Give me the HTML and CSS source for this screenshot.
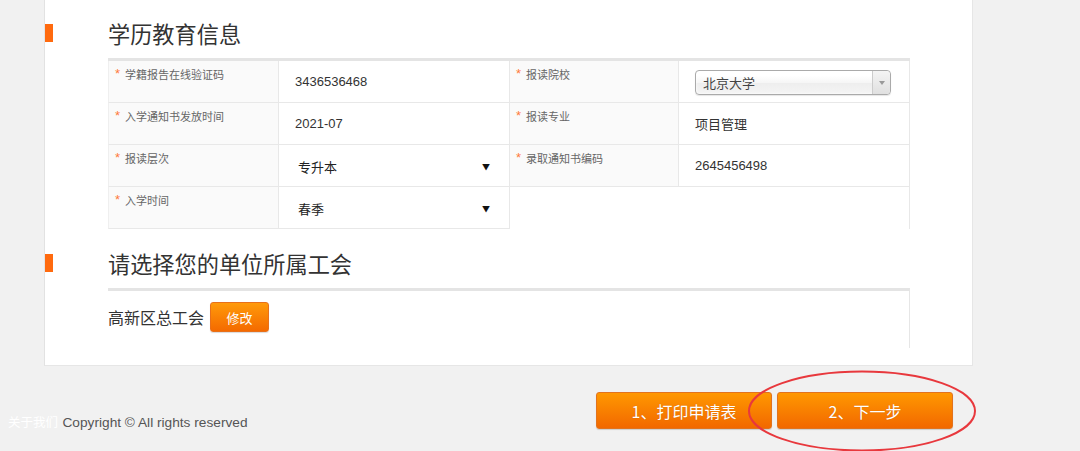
FILE: index.html
```html
<!DOCTYPE html>
<html lang="zh-CN">
<head>
<meta charset="utf-8">
<title>学历教育信息</title>
<link rel="stylesheet" href="styles.css">
</head>
<body>
<div class="panel">
  <div class="sec-head">
    <span class="marker"></span>
    <h2 class="sec-title">学历教育信息</h2>
  </div>
  <div class="info-grid">
    <div class="lbl"><span class="star">*</span>学籍报告在线验证码</div>
    <div class="val bdr">3436536468</div>
    <div class="lbl"><span class="star">*</span>报读院校</div>
    <div class="val bdr">
      <div class="chosen"><span class="chosen-text">北京大学</span><span class="chosen-arrow"><i></i></span></div>
    </div>

    <div class="lbl"><span class="star">*</span>入学通知书发放时间</div>
    <div class="val bdr">2021-07</div>
    <div class="lbl"><span class="star">*</span>报读专业</div>
    <div class="val bdr">项目管理</div>

    <div class="lbl"><span class="star">*</span>报读层次</div>
    <div class="val bdr"><div class="plain-select"><span>专升本</span><span class="tri">▼</span></div></div>
    <div class="lbl"><span class="star">*</span>录取通知书编码</div>
    <div class="val bdr">2645456498</div>

    <div class="lbl"><span class="star">*</span>入学时间</div>
    <div class="val bdr"><div class="plain-select"><span>春季</span><span class="tri">▼</span></div></div>
    <div class="empty"></div>
    <div class="empty bdr"></div>
  </div>

  <div class="sec-head second">
    <span class="marker"></span>
    <h2 class="sec-title">请选择您的单位所属工会</h2>
  </div>
  <div class="union-box">
    <span class="union-name">高新区总工会</span>
    <button class="btn-small">修改</button>
  </div>
</div>

<div class="footer">
  <div class="copy"><span class="about">关于我们</span> <span class="rights">Copyright © All rights reserved</span></div>
  <div class="actions">
    <button class="btn-big">1、打印申请表</button>
    <button class="btn-big">2、下一步</button>
  </div>
</div>

<svg class="circle-mark" width="236" height="86" viewBox="0 0 236 86">
  <ellipse cx="116" cy="42" rx="113" ry="39.5" fill="none" stroke="#e8383d" stroke-width="2"/>
</svg>
</body>
</html>
```
FILE: styles.css
```css
html, body {
  margin: 0;
  padding: 0;
}
body {
  background: #f1f1f1;
  font-family: "Liberation Sans", "Noto Sans CJK SC", sans-serif;
  color: #333;
  width: 1080px;
  height: 451px;
  overflow: hidden;
  position: relative;
}
.panel {
  box-sizing: border-box;
  margin-left: 44px;
  width: 929px;
  background: #fff;
  border-left: 1px solid #e2e2e2;
  border-right: 1px solid #e6e6e6;
  border-bottom: 1px solid #e6e6e6;
  padding: 18px 0 17px 0;
}
.sec-head {
  display: flex;
  align-items: center;
  height: 30px;
}
.sec-head.second {
  margin-top: 19px;
}
.marker {
  width: 8px;
  height: 18px;
  background: #ff6a0e;
  flex: none;
}
.sec-title {
  margin: 0 0 0 55px;
  font-family: "Noto Sans CJK SC", sans-serif;
  font-size: 22.2px;
  font-weight: normal;
  line-height: 30px;
  color: #333;
}
.info-grid {
  margin: 10px 0 0 63px;
  width: 802px;
  display: grid;
  grid-template-columns: 171px 231px 169px 231px;
  grid-auto-rows: 42px;
  border-top: 3px solid #e4e4e4;
}
.info-grid > div {
  box-sizing: border-box;
}
.lbl {
  background: #fafafa;
  border-bottom: 1px solid #e8e8e8;
  border-right: 1px solid #e8e8e8;
  padding: 5px 0 0 6px;
  font-family: "Noto Sans CJK SC", sans-serif;
  font-size: 11px;
  line-height: 16px;
  color: #666;
}
.info-grid > .lbl:nth-child(4n+1) {
  border-left: 1px solid #efefef;
}
.star {
  color: #ff7a3a;
  font-family: "Liberation Sans", sans-serif;
  font-size: 13px;
  margin-right: 5px;
  position: relative;
  top: -1px;
}
.val {
  display: flex;
  align-items: center;
  padding-left: 16px;
  border-bottom: 1px solid #e8e8e8;
  font-size: 13px;
  color: #333;
}
.bdr {
  border-right: 1px solid #e8e8e8;
}
.empty {
  background: #fff;
}
.chosen {
  box-sizing: border-box;
  width: 196px;
  height: 25px;
  margin-top: 2px;
  border: 1px solid #aaa;
  border-radius: 4px;
  background: linear-gradient(#ffffff 20%, #f6f6f6 50%, #eeeeee 52%, #f4f4f4 100%);
  box-shadow: 0 0 3px #fff inset, 0 1px 1px rgba(0,0,0,0.1);
  display: flex;
  align-items: center;
  justify-content: space-between;
}
.chosen-text {
  padding-left: 7px;
  font-family: "Noto Sans CJK SC", sans-serif;
  font-size: 13px;
  color: #444;
}
.chosen-arrow {
  width: 17px;
  height: 23px;
  border-left: 1px solid #ccc;
  background: linear-gradient(#f4f4f4, #e0e0e0);
  border-radius: 0 4px 4px 0;
  display: flex;
  align-items: center;
  justify-content: center;
}
.chosen-arrow i {
  width: 0;
  height: 0;
  border-left: 3px solid transparent;
  border-right: 3px solid transparent;
  border-top: 4px solid #999;
}
.plain-select {
  width: 192px;
  margin: 1px 0 0 3px;
  display: flex;
  justify-content: space-between;
  align-items: center;
  font-family: "Noto Sans CJK SC", sans-serif;
  font-size: 13px;
  color: #222;
}
.tri {
  font-size: 8px;
  color: #111;
}
.union-box {
  margin: 10px 0 0 63px;
  width: 802px;
  box-sizing: border-box;
  border-top: 3px solid #e4e4e4;
  border-right: 1px solid #e6e6e6;
  padding: 11px 0 16px 0;
  display: flex;
  align-items: center;
  gap: 6px;
}
.union-name {
  font-family: "Noto Sans CJK SC", sans-serif;
  font-size: 16px;
  color: #333;
}
.btn-small {
  box-sizing: border-box;
  width: 59px;
  height: 30px;
  border: 1px solid #e8701a;
  border-radius: 3px;
  background: linear-gradient(#ff9a0a, #f46a00);
  color: #fff;
  font-family: "Noto Sans CJK SC", sans-serif;
  font-size: 13px;
  padding: 0;
  box-shadow: 0 1px 1px rgba(0,0,0,0.15);
}
.footer {
  display: flex;
  align-items: flex-start;
}
.copy {
  margin-top: 46px;
  padding-left: 8px;
  line-height: 20px;
  white-space: nowrap;
}
.about {
  font-family: "Noto Sans CJK SC", sans-serif;
  font-size: 12.5px;
  color: #fff;
}
.rights {
  font-family: "Liberation Sans", sans-serif;
  font-size: 13.7px;
  color: #555;
}
.actions {
  margin: 26px 127px 0 auto;
  display: flex;
  gap: 5px;
}
.btn-big {
  box-sizing: border-box;
  width: 176px;
  height: 37px;
  border: 1px solid #e2731e;
  border-radius: 3px;
  background: linear-gradient(#ff9800, #f26800);
  color: #fff;
  font-family: "Noto Sans CJK SC", sans-serif;
  font-size: 16px;
  padding: 0;
  text-shadow: 0 0 1px rgba(120,50,0,0.35);
  box-shadow: 0 1px 1px rgba(0,0,0,0.15);
}
.circle-mark {
  position: absolute;
  left: 746px;
  top: 369px;
  pointer-events: none;
}
```
